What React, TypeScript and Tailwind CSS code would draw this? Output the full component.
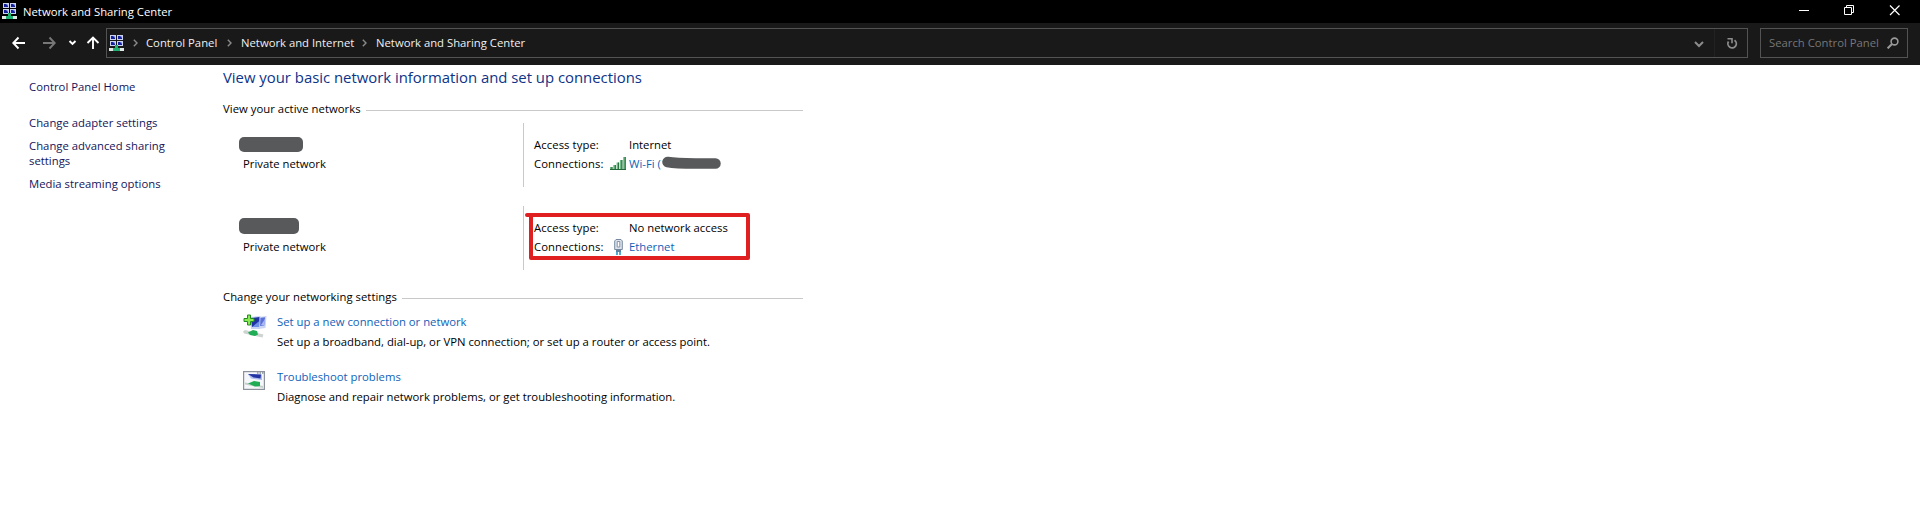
import React from "react";

function NetIcon() {
  const screen = (x: number, y: number) => (
    <g key={x + "-" + y} transform={`translate(${x} ${y})`}>
      <path d="M0 0h6v5H0z" fill="#ccd3ee" />
      <path d="M1 1h4v3H1z" fill="#8fa0e6" />
      <path d="M1 1h2l2 2v1H1z" fill="#14209c" />
    </g>
  );
  return (
    <svg width="16" height="17" viewBox="0 0 16 17" className="block shrink-0">
      {screen(1, 0)}
      {screen(8, 0)}
      {screen(1, 6)}
      {screen(8, 6)}
      <rect x="0" y="13" width="15" height="3" fill="#dfe6e4" />
      <path d="M6 10h3v3h2v3H4v-3h2z" fill="#20b070" />
    </svg>
  );
}

function Crumb({ className }: { className: string }) {
  return (
    <svg width="5" height="8" viewBox="0 0 5 8" className={"block shrink-0 " + className}>
      <path d="M.8.8 4 4 .8 7.2" fill="none" stroke="#8a8a8a" strokeWidth="1.4" />
    </svg>
  );
}

function TitleBar() {
  return (
    <header className="flex h-[23px] items-start bg-black text-white">
      <div className="mt-[3px] ml-[2px]">
        <NetIcon />
      </div>
      <span className="mt-[4px] ml-[5px] leading-4">Network and Sharing Center</span>
      <svg width="102" height="12" viewBox="0 0 102 12" className="mt-1 mr-[19px] ml-auto block" fill="none" stroke="#fff">
        <path d="M0 6.500h10" />
        <path d="M45.500 3.500h7v7h-7zM47.500 3.500v-2h7v7h-2" />
        <path d="m91 1.500 9.500 9.500m0-9.500L91 11" strokeWidth="1.200" />
      </svg>
    </header>
  );
}

function Toolbar() {
  return (
    <nav className="flex h-[42px] items-start bg-[#191919] pt-[5px] text-[#f0f0f0]">
      <svg width="106" height="30" viewBox="0 0 106 30" className="block shrink-0" fill="none" stroke="#fff" strokeWidth="1.900">
        <path d="M25 15H13.500M18.500 9.500 13.300 15l5.200 5.500" />
        <path d="M43 15h11.500M49.500 9.500 54.700 15l-5.200 5.500" stroke="#777" />
        <path d="m69.500 13 3 3 3-3" />
        <path d="M93 21V9.800M87.500 15 93 9.600l5.500 5.400" />
      </svg>
      <div className="flex h-[30px] w-[1642px] items-center border border-[#535353]">
        <div className="ml-[2px]">
          <NetIcon />
        </div>
        <Crumb className="ml-[8px]" />
        <span className="ml-[8px] w-[72px] pt-px whitespace-nowrap">Control Panel</span>
        <Crumb className="ml-[9px]" />
        <span className="ml-[9px] w-[112px] pt-px whitespace-nowrap">Network and Internet</span>
        <Crumb className="ml-[9px]" />
        <span className="ml-[9px] pt-px whitespace-nowrap">Network and Sharing Center</span>
        <svg width="54" height="28" viewBox="0 0 54 28" className="ml-auto block" fill="none" stroke="#8c8c8c">
          <path d="m2 13 4 4 4-4" strokeWidth="2" />
          <path d="M21.500 0v28" stroke="#222" />
          <path d="M41.500 11.200a4.200 4.200 0 1 1-6 1.300" strokeWidth="1.800" />
          <path d="M34.500 9.800h4.500v4.500" strokeWidth="1.600" />
        </svg>
      </div>
      <div className="ml-3 flex h-[30px] w-[148px] items-center border border-[#535353] text-[#777]">
        <span className="ml-2 w-[110px] pt-px whitespace-nowrap">Search Control Panel</span>
        <svg width="12" height="12" viewBox="0 0 12 12" className="ml-[8px] block" fill="none" stroke="#999" strokeWidth="1.600">
          <circle cx="7.500" cy="4.500" r="3.400" />
          <path d="M5 7 .6 11.400" strokeWidth="2" />
        </svg>
      </div>
    </nav>
  );
}

function Sidebar() {
  return (
    <aside className="flex w-[223px] flex-col pt-[14px] pl-[29px] leading-[15px] tracking-[0.02px] whitespace-nowrap text-[#14145a]">
      <a>Control Panel Home</a>
      <a className="mt-[21px]">Change adapter settings</a>
      <a className="mt-[8px]">
        Change advanced sharing
        <br />
        settings
      </a>
      <a className="mt-[8px]">Media streaming options</a>
    </aside>
  );
}

function SectionTitle({ children }: { children: React.ReactNode }) {
  return (
    <div className="flex h-4 items-center leading-4">
      <h2 className="tracking-[0.03px] whitespace-nowrap">{children}</h2>
      <div className="mt-[3px] ml-[5px] h-px flex-1 bg-[#c9c9c9]" />
    </div>
  );
}

function WifiIcon() {
  return (
    <svg width="16" height="13" viewBox="0 0 16 13" className="-mt-px block">
      <path d="M0 10h2.500v3H0zM3.300 8h2.500v5H3.300zM6.600 5.500h2.500V13H6.600zM9.900 3h2.500v10H9.900zM13.200 0h2.600v13h-2.600z" fill="#6fb985" />
      <path d="M2 10v3M5.300 8v5M8.600 5.500V13M11.900 3v10M15.200 0v13M0 12.500h16" stroke="#25693b" />
    </svg>
  );
}

function EthernetIcon() {
  return (
    <svg width="9" height="16" viewBox="0 0 9 16" className="ml-1 block">
      <path d="M2 .5h5l1.300 1.500v8.500H.7V2z" fill="#dce3ec" stroke="#78899f" />
      <path d="M3.200 2.500v5.500h2.600V2.500z" fill="#fff" stroke="#8593a8" />
      <path d="M2 10.500h5V13H2z" fill="#68809a" />
      <path d="M3 12.500V16M6 12.500V16" stroke="#1b91c2" strokeWidth="1.500" />
    </svg>
  );
}

function SetupIcon() {
  return (
    <svg width="24" height="24" viewBox="0 0 24 24" className="block">
      <path d="m15 3 8.500-1-1 12-7 1z" fill="#cbd4f3" />
      <path d="m16.500 4 5.500-.8-.7 8.300-4.300.5z" fill="#5a70d8" />
      <path d="m18 11 4-6-.7 6.500z" fill="#a9baf3" />
      <path d="m7 3 10.500-1-.5 13H8z" fill="#c9d3f3" />
      <path d="m8 4 8.500-1-.5 10H9z" fill="#2032a4" />
      <path d="m9 13 7.300-6-.3 6z" fill="#6f8ee6" />
      <path d="m0 17.500 2-1.500 18.500 4.500-1 3L1 19.500z" fill="#cdd4d2" />
      <path d="m5 18.500 5-2.500 4 1 1 3.500-3 1.500-5-1z" fill="#21ad55" />
      <path d="M4.500 1h3v3.500H11v3H7.500V11h-3V7.500H1v-3h3.500z" fill="#8bea54" stroke="#238b22" />
    </svg>
  );
}

function TroubleIcon() {
  return (
    <svg width="22" height="19" viewBox="0 0 22 19" className="mt-[2px] block">
      <rect x=".6" y=".6" width="20.800" height="17.800" fill="#f5f7fa" stroke="#8b929b" strokeWidth="1.200" />
      <path d="M14 1.500h1.500v1H14zM16.500 1.500H18v1h-1.500zM19 1.500h1.500v1H19z" fill="#55606e" />
      <path d="m5 3 14 .5V9L8 7.500z" fill="#aebdf0" />
      <path d="m5 3 13 .5-.5 4-7-1z" fill="#2333a2" />
      <path d="m2 11.500 18 3.500v2L2 13.500z" fill="#c6cecb" />
      <path d="m5 12.500 6-2.500 6 1v4l-5 .5z" fill="#21ad55" />
    </svg>
  );
}

type NetProps = { access: string; icon: React.ReactNode; link: React.ReactNode; mask: React.ReactNode };

function Network({ access, icon, link, mask }: NetProps) {
  return (
    <div className="flex h-16 whitespace-nowrap">
      <div className="w-[300px] pl-4">
        <div className="h-[33px] pt-[12px]">{mask}</div>
        <div className="pl-1 leading-[16px]">Private network</div>
      </div>
      <div className="border-l border-[#c9c9c9] pt-[14px] pl-[10px] leading-[16px]">
        <div className="flex h-[19px]">
          <span className="w-[95px] tracking-[0.08px]">Access type:</span>
          <span>{access}</span>
        </div>
        <div className="flex h-4">
          <span className="w-[76px] tracking-[0.08px]">Connections:</span>
          <span className="flex w-[19px] items-center">{icon}</span>
          <span className="flex text-[#0f62b8]">{link}</span>
        </div>
      </div>
    </div>
  );
}

function Task({ icon, title, text }: { icon: React.ReactNode; title: string; text: string }) {
  return (
    <div className="flex h-[55px] whitespace-nowrap">
      <div className="w-[34px]">{icon}</div>
      <div className="leading-[16px]">
        <a className="block h-[20px] text-[#0f62b8]">{title}</a>
        <p>{text}</p>
      </div>
    </div>
  );
}

export default function App() {
  return (
    <div className="h-[517px] w-[1920px] overflow-hidden bg-white font-['Open_Sans','Noto_Sans',sans-serif] text-[11.3px] text-black">
      <TitleBar />
      <Toolbar />
      <div className="flex">
        <Sidebar />
        <main className="relative w-[580px]">
          <h1 className="text-[14.9px] leading-[25px] tracking-[-0.01px] whitespace-nowrap text-[#0c3488]">
            View your basic network information and set up connections
          </h1>
          <div className="mt-[11px]">
            <SectionTitle>View your active networks</SectionTitle>
          </div>
          <div className="mt-[6px]">
            <Network
              access="Internet"
              icon={<WifiIcon />}
              link={
                <>
                  <a className="w-[32px]">Wi-Fi (</a>
                  <svg width="61" height="14" viewBox="0 0 61 14" className="block">
                    <path d="M6.500 6c8 1.500 18 1.500 28 1.500h20" fill="none" stroke="#58595b" strokeWidth="10.500" strokeLinecap="round" />
                  </svg>
                </>
              }
              mask={<div className="mt-[2px] h-[15px] w-16 rounded-[5px] bg-[#58595b]" />}
            />
          </div>
          <div className="mt-[19px]">
            <Network
              access="No network access"
              icon={<EthernetIcon />}
              link={<a>Ethernet</a>}
              mask={<div className="h-4 w-[60px] rounded-[5px] bg-[#58595b]" />}
            />
          </div>
          <svg width="228" height="50" viewBox="0 0 228 50" className="absolute top-[147px] left-[301px]" fill="none" stroke="#e02020" strokeWidth="4" strokeLinecap="round" strokeLinejoin="round">
            <path d="M3 3h221v43H7V4" />
          </svg>
          <div className="mt-[19px]">
            <SectionTitle>Change your networking settings</SectionTitle>
          </div>
          <div className="mt-[9px] pl-5">
            <Task icon={<SetupIcon />} title="Set up a new connection or network" text="Set up a broadband, dial-up, or VPN connection; or set up a router or access point." />
            <Task icon={<TroubleIcon />} title="Troubleshoot problems" text="Diagnose and repair network problems, or get troubleshooting information." />
          </div>
        </main>
      </div>
    </div>
  );
}
